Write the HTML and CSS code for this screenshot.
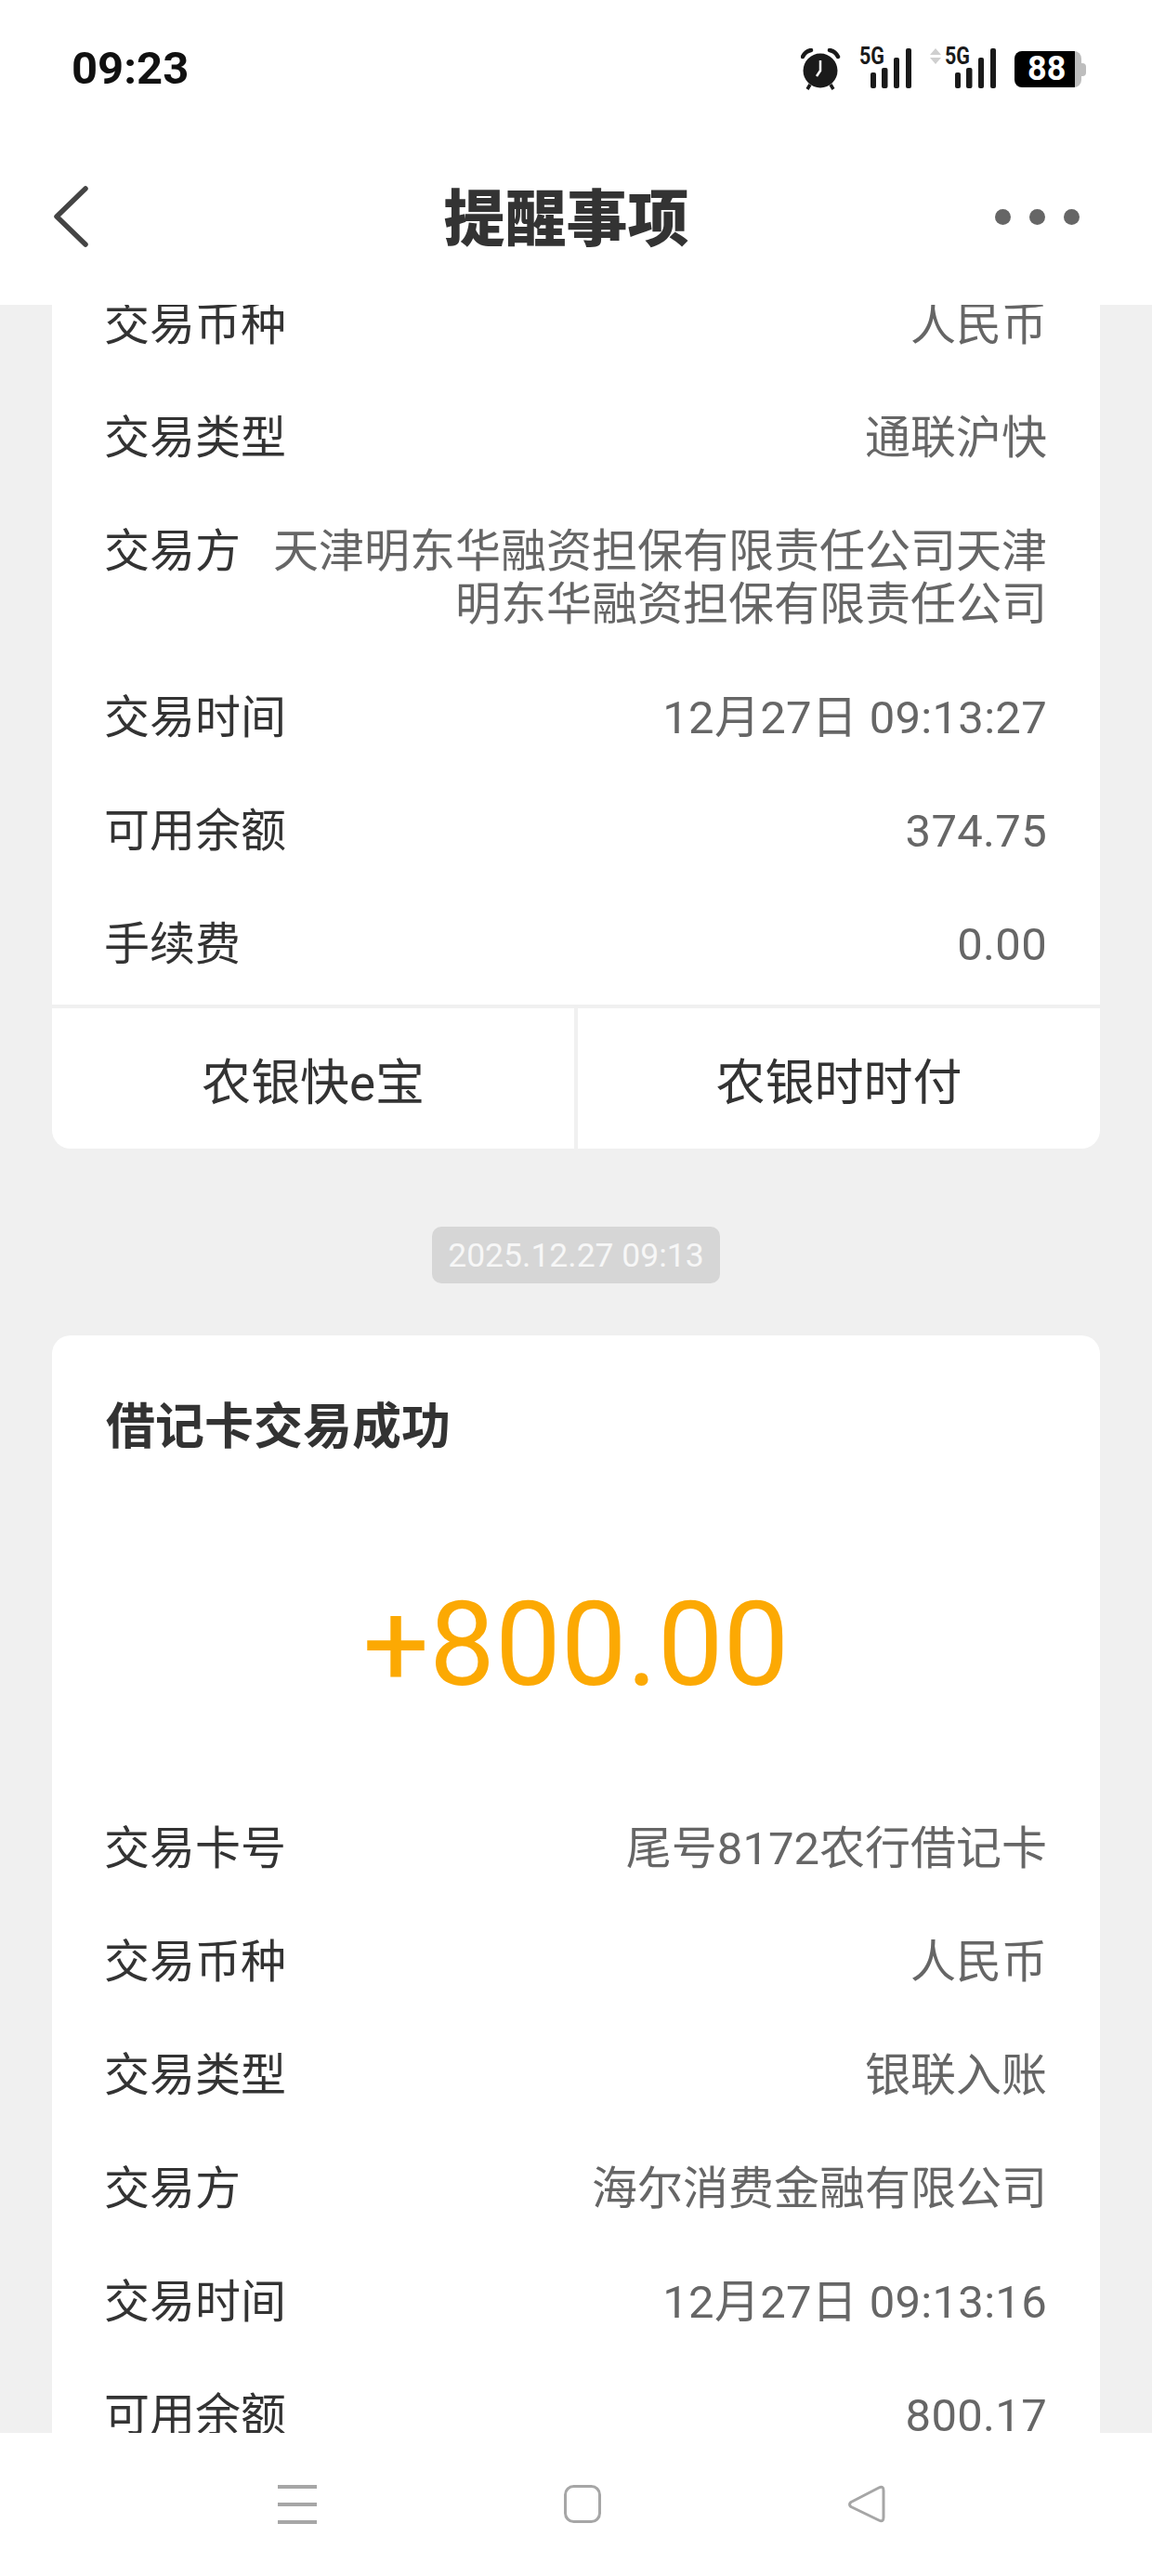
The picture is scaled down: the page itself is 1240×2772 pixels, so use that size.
FILE: index.html
```html
<!DOCTYPE html>
<html lang="zh-CN">
<head>
  <meta charset="UTF-8">
  <meta name="viewport" content="width=device-width, initial-scale=1.0">
  <title>提醒事项</title>
  <link rel="stylesheet" href="styles.css">
</head>
<body>
  <header class="top">
    <div class="status-bar">
      <span class="clock">09:23</span>
      <div class="status-icons">
        <svg class="alarm" width="44" height="46" viewBox="0 0 44 46">
          <path d="M2 9Q5 3 11 2M40 9Q37 3 31 2" fill="none" stroke="#1a1a1a" stroke-width="4.5" stroke-linecap="round"/>
          <path d="M10 39L7 44M32 39L35 44" fill="none" stroke="#1a1a1a" stroke-width="3.5"/>
          <circle cx="21" cy="24" r="18.5" fill="#1a1a1a"/>
          <path d="M21 13V24L17 30" fill="none" stroke="#fff" stroke-width="2.5"/>
        </svg>
        <svg class="signal" width="57" height="51" viewBox="0 -8 57 51">
          <text x="0" y="17" class="net-label" textLength="27" lengthAdjust="spacingAndGlyphs">5G</text>
          <rect x="12" y="26" width="6" height="17" rx="2"/>
          <rect x="24" y="21" width="6.5" height="22" rx="2"/>
          <rect x="37" y="10" width="6" height="33" rx="2"/>
          <rect x="50" y="0" width="6" height="43" rx="2"/>
        </svg>
        <svg class="signal" width="72" height="51" viewBox="0 -8 72 51">
          <path d="M6 0L12 7H0ZM0 10H12L6 17Z" fill="#cfcfcf"/>
          <text x="16" y="17" class="net-label" textLength="27" lengthAdjust="spacingAndGlyphs">5G</text>
          <rect x="27" y="26" width="6" height="17" rx="2"/>
          <rect x="39" y="21" width="6.5" height="22" rx="2"/>
          <rect x="52" y="10" width="6" height="33" rx="2"/>
          <rect x="65" y="0" width="6" height="43" rx="2"/>
        </svg>
        <div class="battery">
          <span class="battery-body">88</span>
          <span class="battery-cap"></span>
        </div>
      </div>
    </div>
    <div class="title-bar">
      <svg class="back" width="38" height="66" viewBox="0 0 38 66">
        <path d="M35 3L4 33L35 63" fill="none" stroke="#444" stroke-width="5.5" stroke-linecap="round" stroke-linejoin="round"/>
      </svg>
      <h1>提醒事项</h1>
      <div class="more"><i></i><i></i><i></i></div>
    </div>
  </header>

  <main class="feed">
    <section class="card card-scrolled">
      <div class="row"><span class="label">交易币种</span><span class="value">人民币</span></div>
      <div class="row"><span class="label">交易类型</span><span class="value">通联沪快</span></div>
      <div class="row"><span class="label">交易方</span><span class="value">天津明东华融资担保有限责任公司天津明东华融资担保有限责任公司</span></div>
      <div class="row"><span class="label">交易时间</span><span class="value num">12月27日 09:13:27</span></div>
      <div class="row"><span class="label">可用余额</span><span class="value num">374.75</span></div>
      <div class="row"><span class="label">手续费</span><span class="value num">0.00</span></div>
      <div class="actions">
        <div class="action">农银快e宝</div>
        <div class="action">农银时时付</div>
      </div>
    </section>

    <div class="stamp"><span>2025.12.27 09:13</span></div>

    <section class="card">
      <h2>借记卡交易成功</h2>
      <div class="amount">+800.00</div>
      <div class="row"><span class="label">交易卡号</span><span class="value">尾号8172农行借记卡</span></div>
      <div class="row"><span class="label">交易币种</span><span class="value">人民币</span></div>
      <div class="row"><span class="label">交易类型</span><span class="value">银联入账</span></div>
      <div class="row"><span class="label">交易方</span><span class="value">海尔消费金融有限公司</span></div>
      <div class="row"><span class="label">交易时间</span><span class="value num">12月27日 09:13:16</span></div>
      <div class="row"><span class="label">可用余额</span><span class="value num">800.17</span></div>
    </section>
  </main>

  <nav class="nav-bar">
    <svg width="42" height="42" viewBox="0 0 42 42">
      <path d="M0 2H42M0 21H42M0 40H42" stroke="#a6a6a6" stroke-width="4"/>
    </svg>
    <svg width="40" height="42" viewBox="0 0 40 42">
      <rect x="1.5" y="1.5" width="37" height="38" rx="9" fill="none" stroke="#a6a6a6" stroke-width="3"/>
    </svg>
    <svg width="40" height="42" viewBox="0 0 40 42">
      <path d="M3 18.5L33 3Q38 .5 38 6V35Q38 40.5 33 38L3 23.5Q0 21 3 18.5Z" fill="none" stroke="#a6a6a6" stroke-width="3" stroke-linejoin="round"/>
    </svg>
  </nav>
</body>
</html>
```

FILE: styles.css
```css
* {
  box-sizing: border-box;
}
html, body {
  margin: 0;
  padding: 0;
}
body {
  width: 1240px;
  height: 2772px;
  overflow: hidden;
  display: flex;
  flex-direction: column;
  background-color: #f0f0f0;
  font-family: Roboto, "Noto Sans CJK SC", sans-serif;
}

/* top */
.top {
  height: 328px;
  flex: none;
  background-color: #fff;
}
.status-bar {
  height: 146px;
  padding: 46px 71px 0 77px;
  display: flex;
  justify-content: space-between;
  align-items: flex-start;
}
.clock {
  font-size: 49px;
  font-weight: 700;
  line-height: 56px;
  color: #111;
}
.status-icons {
  display: flex;
  align-items: flex-start;
  gap: 19px;
  padding-top: 6px;
}
.signal {
  margin-top: -8px;
}
.signal rect {
  fill: #1a1a1a;
}
.net-label {
  font-size: 25px;
  font-weight: 700;
  fill: #1a1a1a;
}
.battery {
  display: flex;
  align-items: center;
  margin-top: 3px;
}
.battery-body {
  width: 72px;
  height: 39px;
  border-radius: 8px;
  background: linear-gradient(90deg, #000 90%, #bdbdbd 90%);
  color: #fff;
  font-size: 36px;
  font-weight: 700;
  line-height: 39px;
  padding-left: 14px;
}
.battery-cap {
  width: 5px;
  height: 14px;
  background-color: #bdbdbd;
  border-radius: 0 4px 4px 0;
}
.title-bar {
  height: 182px;
  padding: 0 78px 0 57px;
  display: grid;
  grid-template-columns: 1fr auto 1fr;
  align-items: center;
}
.back {
  margin-bottom: 8px;
}
.title-bar h1 {
  margin: 0;
  font-size: 66px;
  font-weight: 900;
  color: #333;
  line-height: 80px;
}
.more {
  display: flex;
  justify-content: flex-end;
  gap: 20px;
  margin-bottom: 8px;
}
.more i {
  width: 17px;
  height: 17px;
  border-radius: 50%;
  background-color: #666;
}

/* cards */
.feed {
  flex: 1;
  min-height: 0;
  overflow: hidden;
  padding: 0 56px;
}
.card {
  background-color: #fff;
  border-radius: 20px;
  overflow: hidden;
}
.card-scrolled {
  margin-top: -41px;
}
.row {
  display: flex;
  justify-content: space-between;
  gap: 20px;
  padding: 33.5px 57px 31.5px 56px;
  font-size: 49px;
  line-height: 57px;
}
.label {
  flex: none;
  color: #333;
}
.value {
  color: #666;
  text-align: right;
}
.num {
  letter-spacing: 0.3px;
}
.actions {
  margin-top: 5px;
  height: 155px;
  display: flex;
  border-top: 4px solid #f0f0f0;
}
.action {
  flex: 1;
  display: flex;
  justify-content: center;
  align-items: center;
  font-size: 53px;
  color: #333;
}
.action + .action {
  border-left: 4px solid #f0f0f0;
}
.stamp {
  display: flex;
  justify-content: center;
  margin: 84px 0 56px;
}
.stamp span {
  width: 310px;
  height: 61px;
  line-height: 62px;
  border-radius: 10px;
  background-color: #d6d6d6;
  color: #f7f7f7;
  font-size: 35.5px;
  text-align: center;
}
.card h2 {
  margin: 0;
  padding: 67px 57px 0 58px;
  font-size: 53px;
  font-weight: 700;
  line-height: 64px;
  color: #333;
}
.amount {
  margin-top: 127px;
  margin-bottom: 82px;
  text-align: center;
  font-size: 126px;
  line-height: 150px;
  color: #fca903;
}

/* bottom nav */
.nav-bar {
  height: 154px;
  flex: none;
  background-color: #fff;
  padding: 56px 0 0 12px;
  display: flex;
  justify-content: center;
  align-items: flex-start;
  gap: 266px;
}
```
